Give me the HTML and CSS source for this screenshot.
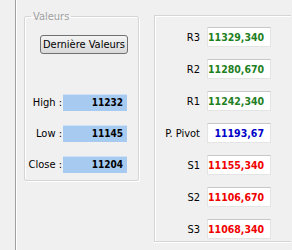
FILE: index.html
```html
<!DOCTYPE html>
<html>
<head>
<meta charset="utf-8">
<link rel="stylesheet" href="styles.css">
</head>
<body>
<div class="page">
  <div class="rule"></div>
  <fieldset class="group">
    <legend class="legend">Valeurs</legend>
    <button class="btn">Dernière Valeurs</button>
    <div class="vals">
      <div class="vrow"><span class="vlabel">High :</span><span class="vbox">11232</span></div>
      <div class="vrow"><span class="vlabel">Low :</span><span class="vbox">11145</span></div>
      <div class="vrow"><span class="vlabel">Close :</span><span class="vbox">11204</span></div>
    </div>
  </fieldset>
  <div class="panel">
    <div class="prow"><span class="plabel">R3</span><span class="pbox green">11329,340</span></div>
    <div class="prow"><span class="plabel">R2</span><span class="pbox green">11280,670</span></div>
    <div class="prow"><span class="plabel">R1</span><span class="pbox green">11242,340</span></div>
    <div class="prow"><span class="plabel">P. Pivot</span><span class="pbox blue">11193,67</span></div>
    <div class="prow"><span class="plabel">S1</span><span class="pbox red">11155,340</span></div>
    <div class="prow"><span class="plabel">S2</span><span class="pbox red">11106,670</span></div>
    <div class="prow"><span class="plabel">S3</span><span class="pbox red">11068,340</span></div>
  </div>
</div>
</body>
</html>
```
FILE: styles.css
```css
html, body {
  margin: 0;
  padding: 0;
  background: #f0f0f0;
  overflow: hidden;
}
body {
  font-family: Tahoma, "DejaVu Sans Condensed", "DejaVu Sans", sans-serif;
  font-size: 11px;
  color: #000;
}
.page {
  display: flex;
  align-items: flex-start;
  width: 292px;
  height: 250px;
}
.rule {
  flex-shrink: 0;
  margin-left: 15px;
  width: 1px;
  height: 250px;
  background: #a0a0a0;
  border-right: 1px solid #ffffff;
}
.group {
  flex-shrink: 0;
  box-sizing: border-box;
  min-width: 0;
  margin: 10px 0 0 7px;
  padding: 0;
  width: 115px;
  height: 171px;
  border: 1px solid #d5d5d5;
  border-radius: 2px;
  box-shadow: inset 1px 1px 0 #fff, 1px 1px 0 #fff;
  display: flex;
  flex-direction: column;
  align-items: flex-start;
}
.legend {
  margin-left: 6px;
  padding: 0 2px;
  color: #a0a0a0;
  font-size: 11px;
  line-height: 13px;
}
.btn {
  box-sizing: border-box;
  margin: 12px 0 0 15px;
  width: 88px;
  height: 19px;
  padding: 0;
  font-family: inherit;
  font-size: 11px;
  color: #000;
  border: 1px solid #707070;
  border-radius: 3px;
  background: linear-gradient(#f4f4f4, #e6e6e6 50%, #d9d9d9);
}
.vals {
  margin-top: 40px;
  display: flex;
  flex-direction: column;
  gap: 14px;
}
.vrow {
  display: flex;
  align-items: center;
}
.vlabel {
  width: 37px;
  text-align: right;
  margin-right: 1px;
}
.vbox {
  box-sizing: border-box;
  width: 64px;
  height: 17px;
  line-height: 16px;
  background: #a6caf0;
  border-top: 1px solid #d0e2f6;
  text-align: right;
  padding-right: 4px;
  font-weight: bold;
  font-size: 10px;
}
.panel {
  flex-shrink: 0;
  box-sizing: border-box;
  margin: 15px 0 0 15px;
  width: 137px;
  height: 227px;
  border: 1px solid #d5d5d5;
  border-right: none;
  box-shadow: inset 1px 1px 0 #fff, 0 1px 0 #fff;
  padding-top: 11px;
  display: flex;
  flex-direction: column;
  gap: 12px;
}
.prow {
  display: flex;
  align-items: center;
}
.plabel {
  width: 45px;
  text-align: right;
  margin-right: 7px;
}
.pbox {
  box-sizing: border-box;
  width: 64px;
  height: 20px;
  line-height: 18px;
  background: #fff;
  border: 1px solid #e4e4e4;
  border-top-color: #c8c8c8;
  text-align: right;
  padding-right: 6px;
  font-weight: bold;
  font-size: 10.5px;
}
.green { color: #1f7f1f; }
.blue { color: #0000c8; }
.red { color: #f00000; }
```
